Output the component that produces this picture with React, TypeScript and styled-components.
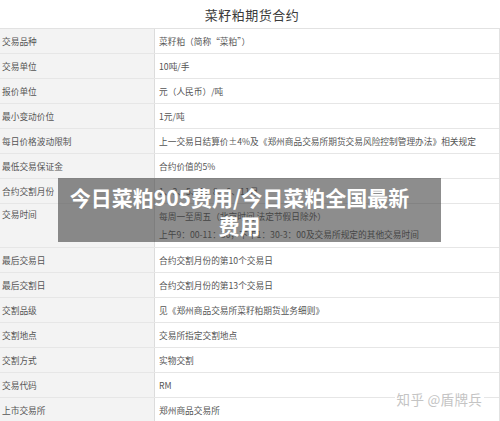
import React from 'react'
import styled, { createGlobalStyle } from 'styled-components'

const GlobalStyle = createGlobalStyle`
  html, body {
    margin: 0;
    padding: 0;
    background: #fff;
  }
  body {
    font-family: "Noto Sans CJK SC", "Noto Sans", sans-serif;
  }
`

const Page = styled.div`
  position: relative;
  width: 500px;
  height: 421px;
  overflow: hidden;
  background: #fff;
`

const Title = styled.h1`
  margin: 0;
  height: 28px;
  display: flex;
  align-items: center;
  justify-content: center;
  padding-left: 4px;
  font-size: 13px;
  font-weight: 400;
  letter-spacing: 0.5px;
  color: #3a3a3a;
`

const Table = styled.div`
  border-top: 1px solid #e2e2e2;
  border-right: 1px solid #e2e2e2;
`

const Row = styled.div<{ $tall?: boolean }>`
  display: grid;
  grid-template-columns: 155px 1fr;
  height: ${p => (p.$tall ? 43 : 24)}px;
  border-bottom: 1px solid #e6e6e6;
`

const Label = styled.div<{ $top?: boolean }>`
  background: #f3f3f3;
  border-right: 1px solid #dcdcdc;
  padding: ${p => (p.$top ? '4px 2px 0' : '0 2px')};
  display: flex;
  align-items: ${p => (p.$top ? 'flex-start' : 'center')};
  font-size: 8.7px;
  color: #555;
  white-space: nowrap;
`

const Value = styled.div`
  padding: 0 4px;
  display: flex;
  flex-direction: column;
  justify-content: center;
  gap: 5px;
  font-size: 8.7px;
  color: #555;
  white-space: nowrap;
`

const Overlay = styled.div`
  position: absolute;
  left: 58px;
  top: 178px;
  width: 383px;
  height: 64px;
  box-sizing: border-box;
  padding: 2px 30px 0 10px;
  background: rgba(58, 58, 58, 0.58);
  display: flex;
  align-items: center;
  justify-content: center;
  text-align: center;
  font-size: 21px;
  font-weight: 700;
  line-height: 28px;
  color: #fff;
`

const Watermark = styled.div`
  position: absolute;
  right: 16px;
  top: 389px;
  padding: 0 2px;
  background: #fff;
  font-size: 13.5px;
  color: #c4c4c4;
  letter-spacing: 0.3px;
`

type Item = { label: string; value: string[] }

const rows: Item[] = [
  { label: '交易品种', value: ['菜籽粕（简称“菜粕”）'] },
  { label: '交易单位', value: ['10吨/手'] },
  { label: '报价单位', value: ['元（人民币）/吨'] },
  { label: '最小变动价位', value: ['1元/吨'] },
  { label: '每日价格波动限制', value: ['上一交易日结算价±4%及《郑州商品交易所期货交易风险控制管理办法》相关规定'] },
  { label: '最低交易保证金', value: ['合约价值的5%'] },
  { label: '合约交割月份', value: ['1、3、5、7、8、9、11月'] },
  {
    label: '交易时间',
    value: ['每周一至周五（北京时间 法定节假日除外）', '上午9：00-11：30，下午1：30-3：00及交易所规定的其他交易时间'],
  },
  { label: '最后交易日', value: ['合约交割月份的第10个交易日'] },
  { label: '最后交割日', value: ['合约交割月份的第13个交易日'] },
  { label: '交割品级', value: ['见《郑州商品交易所菜籽粕期货业务细则》'] },
  { label: '交割地点', value: ['交易所指定交割地点'] },
  { label: '交割方式', value: ['实物交割'] },
  { label: '交易代码', value: ['RM'] },
  { label: '上市交易所', value: ['郑州商品交易所'] },
]

export default function App() {
  return (
    <Page>
      <GlobalStyle />
      <Title>菜籽粕期货合约</Title>
      <Table>
        {rows.map(r => {
          const tall = r.value.length > 1
          return (
            <Row key={r.label} $tall={tall}>
              <Label $top={tall}>{r.label}</Label>
              <Value>
                {r.value.map(v => (
                  <span key={v}>{v}</span>
                ))}
              </Value>
            </Row>
          )
        })}
      </Table>
      <Overlay>今日菜粕905费用/今日菜粕全国最新费用</Overlay>
      <Watermark>知乎 @盾牌兵</Watermark>
    </Page>
  )
}
